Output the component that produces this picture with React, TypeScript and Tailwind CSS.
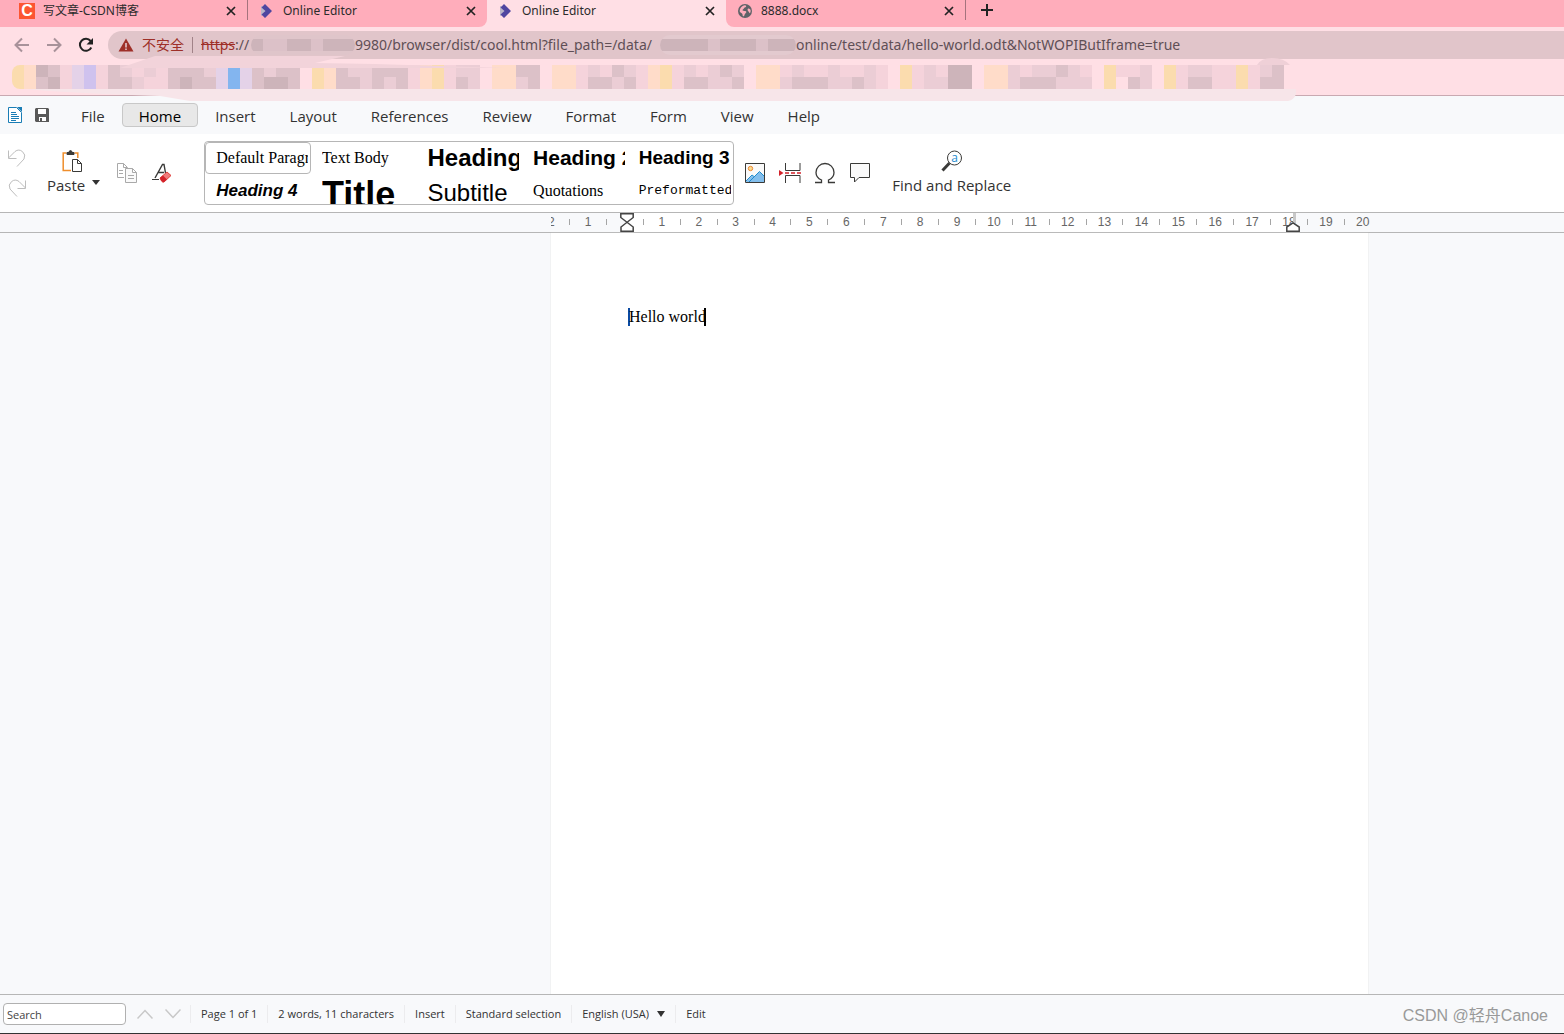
import { Fragment, type ReactNode } from 'react';
import clsx from 'clsx';

const mosaicColors: Record<string, string> = {
  y: '#fbdcae',
  p: '#ffdcc9',
  a: '#f5d3db',
  b: '#ebcdd5',
  c: '#dcc1c8',
  d: '#cdb4ba',
  l: '#e4d2e8',
  v: '#cfc2ee',
  B: '#83b5ef',
};

// Each bookmark: first 12px cell it covers, then its two rows of cells
const bookmarks = [
  { start: 0, rows: ['ypdcalvacbabacccblBlcbcc', 'ypcdalvaccbaacdcclBlcddc'] },
  { start: 25, rows: ['ypcbbcccapyabb', 'ypccbcbcapyacb'] },
  { start: 40, rows: ['ppcc', 'ppbc'] },
  { start: 45, rows: ['ppabacbapyababcb', 'ppaccbcapyaccbbc'] },
  { start: 62, rows: ['ppabaabaaba', 'ppbcccbbcba'] },
  { start: 74, rows: ['yabadd', 'yabbdd'] },
  { start: 81, rows: ['ppbabbcba', 'ppbcccbbb'] },
  { start: 91, rows: ['yaab', 'y.cb'] },
  { start: 96, rows: ['yabbaa', 'yaccaa'] },
  { start: 102, rows: ['ya', 'ya'] },
  { start: 104, rows: ['bc', 'cc'] },
];

const bookmarkRows = [0, 1].map((row) =>
  bookmarks.reduce((line, bookmark) => line.padEnd(bookmark.start, '.') + bookmark.rows[row], ''),
);

const menuTabs = ['File', 'Home', 'Insert', 'Layout', 'References', 'Review', 'Format', 'Form', 'View', 'Help'];

const styles = [
  { name: 'Default Paragraph Style', className: 'font-["Liberation_Serif",serif] text-base' },
  { name: 'Text Body', className: 'font-["Liberation_Serif",serif] text-base' },
  { name: 'Heading 1', className: 'text-2xl font-bold' },
  { name: 'Heading 2', className: 'text-[21px] font-bold' },
  { name: 'Heading 3', className: 'text-[19px] font-bold' },
  { name: 'Heading 4', className: 'text-[17px] font-bold italic' },
  { name: 'Title', className: 'pt-2 text-4xl font-bold' },
  { name: 'Subtitle', className: 'pt-1 text-2xl' },
  { name: 'Quotations', className: 'font-["Liberation_Serif",serif] text-base' },
  { name: 'Preformatted Text', className: 'font-["Liberation_Mono",monospace] text-[13px]' },
];

function Mosaic({ rows, className }: { rows: string[]; className?: string }) {
  return (
    <svg
      className={className}
      width={rows[0].length * 12}
      height={rows.length * 12}
      shapeRendering="crispEdges"
      aria-hidden="true"
    >
      {rows.map((row, y) =>
        row
          .split('')
          .map((key, x) =>
            mosaicColors[key] ? (
              <rect key={`${y}-${x}`} x={x * 12} y={y * 12} width="12" height="12" fill={mosaicColors[key]} />
            ) : null,
          ),
      )}
    </svg>
  );
}

function EditorFavicon() {
  return (
    <svg width="16" height="16" viewBox="0 0 16 16">
      <path d="M2 3l5 1v7l-5 2z" fill="#b9b5c8" />
      <path d="M6 1l7 7-7 7-3.500-3.500L6.500 8 2.500 4.500z" fill="#4f46a0" />
    </svg>
  );
}

function GlobeFavicon() {
  return (
    <svg width="16" height="16" viewBox="0 0 16 16">
      <circle cx="8" cy="8" r="7" fill="#5f6368" />
      <path d="M8 2.200c1 .2 1.500.8 1 1.600-.6.800-1.800.6-2 1.500-.2.900-1.500.9-1.400 1.900.1.800 1.600.6 2.600.7 1.200.2 1.500 1 .8 1.800-.6.700-1.300 1-1.400 2.100-.1.800-.6 1.600-1.400 1.500-.7-.2-.5-1.500-.8-2.300-.3-.8-1.700-1.200-2.600-2.200-.4-3 1.800-6.200 5.200-6.600z" fill="#ffadbb" />
      <path d="M11.300 5.500c1-.2 1.900.6 2.300 1.500.2 1.200 0 2.200-.6 3.200-.9-.2-.7-1.200-1.500-1.800-.9-.6-1.400-2.300-.2-2.900z" fill="#ffadbb" />
    </svg>
  );
}

function BrowserTab({ title, icon }: { title: string; icon: ReactNode }) {
  return (
    <div className="flex h-[21px] w-[239px] shrink-0 items-center pr-[10px] pl-[11px] text-xs text-[#2b2b2b]">
      {icon}
      <span className="ml-2 flex-1 truncate leading-5">{title}</span>
      <button aria-label={`Close ${title}`}>
        <svg width="12" height="12" viewBox="0 0 12 12" stroke="#222" strokeWidth="1.700">
          <path d="M2 2l8 8M10 2l-8 8" />
        </svg>
      </button>
    </div>
  );
}

function BrowserChrome() {
  return (
    <header className="relative h-24 overflow-hidden border-b border-[#c9a9b1] bg-[#ffdfe5] font-['Noto_Sans','Noto_Sans_CJK_SC',sans-serif]">
      <div className="flex h-[27px]">
        <div className="flex rounded-br-lg bg-[#ffadbb] pl-2">
          <BrowserTab
            title="写文章-CSDN博客"
            icon={
              <span className="flex size-4 items-center justify-center bg-[#fc5531] font-['Liberation_Sans',sans-serif] text-base font-bold text-white">
                C
              </span>
            }
          />
          <span className="h-5 w-px bg-[#a5737d]" />
          <BrowserTab title="Online Editor" icon={<EditorFavicon />} />
        </div>
        <BrowserTab title="Online Editor" icon={<EditorFavicon />} />
        <div className="flex flex-1 rounded-bl-lg bg-[#ffadbb]">
          <BrowserTab title="8888.docx" icon={<GlobeFavicon />} />
          <span className="h-5 w-px bg-[#a5737d]" />
          <button aria-label="New tab" className="ml-[15px] h-5">
            <svg width="12" height="12" viewBox="0 0 12 12" stroke="#222" strokeWidth="2">
              <path d="M6 0v12M0 6h12" />
            </svg>
          </button>
        </div>
      </div>

      <div className="flex items-center pt-1 pl-3">
        <button aria-label="Back" className="w-8">
          <svg width="20" height="20" viewBox="0 0 20 20" fill="none" stroke="#a8929a" strokeWidth="2">
            <path d="M17 10H4M10 3.500L3.500 10l6.500 6.500" />
          </svg>
        </button>
        <button aria-label="Forward" className="w-8">
          <svg width="20" height="20" viewBox="0 0 20 20" fill="none" stroke="#a8929a" strokeWidth="2">
            <path d="M3 10h13M10 3.500l6.500 6.500-6.500 6.500" />
          </svg>
        </button>
        <button aria-label="Reload" className="w-8">
          <svg width="20" height="20" viewBox="0 0 20 20">
            <path d="M15.300 12.500A6 6 0 1 1 14.600 6" fill="none" stroke="#222" strokeWidth="2" />
            <path d="M17 3v6.500h-6.500z" fill="#222" />
          </svg>
        </button>
        <div className="flex h-7 flex-1 items-center rounded-l-full bg-[#e1c5ca] pl-[10px] text-sm whitespace-nowrap text-[#5f4f56]">
          <svg width="16" height="16" viewBox="0 0 16 16">
            <path d="M8 1.500L15.500 14.500H.5z" fill="#9e2f28" />
            <path d="M8 6v4.500M8 11.500v1.500" stroke="#e1c5ca" strokeWidth="1.600" />
          </svg>
          <span className="ml-2 text-[#9e2f28]">不安全</span>
          <span className="mx-2 h-4 w-px bg-[#a18288]" />
          <span className="w-[50px]">
            <s className="text-[#9e2f28]">https</s>://
          </span>
          <span className="h-5 w-[104px] overflow-hidden rounded-full bg-[#dfc5ca] py-1">
            <Mosaic rows={['dccddcddd']} />
          </span>
          <span className="w-[305px]">9980/browser/dist/cool.html?file_path=/data/</span>
          <span className="h-5 w-[136px] overflow-hidden rounded-full bg-[#e3cacf] py-1">
            <Mosaic rows={['ddddcdddcddd']} />
          </span>
          <span>online/test/data/hello-world.odt&amp;NotWOPIButIframe=true</span>
        </div>
      </div>

      <svg className="absolute top-14 left-0" width="1296" height="12" aria-hidden="true">
        <path d="M120 12L155 0h190l-30 7 60 1 130 4z" fill="#f2d3da" />
        <path d="M1257 9q4-7 15-7 12 0 18 7z" fill="#efd0d7" />
      </svg>
      <Mosaic rows={bookmarkRows} className="mt-[6px] ml-3 rounded-l-lg" />
    </header>
  );
}

function MenuBar() {
  return (
    <nav className="relative flex h-[38px] items-center bg-[#f8f9fb] pl-2">
      <svg className="absolute -top-[7px] left-0" width="1296" height="14" aria-hidden="true">
        <path d="M24 0h1272v5q-2 6-8 7H190l-30-5-28-1q-60-2-108-6z" fill="#f7e5e9" />
      </svg>
      <svg width="14" height="16" viewBox="0 0 14 16" fill="none" stroke="#1a7db5">
        <path d="M.5.5h8l5 5v10H.5z" fill="#fff" />
        <path d="M9 0h5v5z" fill="#1a7db5" stroke="none" />
        <path d="M3 5.500h5M3 7.500h6M3 9.500h8M3 11.500h8M3 13.500h5" />
      </svg>
      <button aria-label="Save" className="ml-[13px]">
        <svg width="14" height="14" viewBox="0 0 14 14">
          <path d="M1 0h12l1 1v13H1l-1-1V1z" fill="#595959" />
          <path d="M3 1h8v5H3zM4 9h7v4H4z" fill="#fff" />
          <path d="M5 10h2v3H5z" fill="#595959" />
        </svg>
      </button>
      <div className="ml-[15px] flex">
        {menuTabs.map((tab) => (
          <button
            key={tab}
            className={clsx(
              'h-6 rounded-sm border px-4 font-["Open_Sans",sans-serif] text-[15px] leading-6',
              tab === 'Home' ? 'border-[#c8c8c8] bg-[#e8e8e8] text-black' : 'border-transparent text-[#333]',
            )}
          >
            {tab}
          </button>
        ))}
      </div>
    </nav>
  );
}

function Toolbar() {
  return (
    <section className="flex h-[79px] items-center border-b border-[#b6b6b6] bg-white pl-[7px] font-['Open_Sans',sans-serif] text-[15px] text-[#333]">
      <div className="flex flex-col gap-3">
        <button aria-label="Undo">
          <svg width="20" height="18" viewBox="0 0 20 18" fill="none" stroke="#bdbdbd">
            <path d="M1.500 1.500v8h8M1.500 9L8 2.500a6 6 0 0 1 9 7.500L10 17.500" />
          </svg>
        </button>
        <button aria-label="Redo">
          <svg width="20" height="18" viewBox="0 0 20 18" fill="none" stroke="#bdbdbd">
            <path d="M18.500 1.500v8h-8M18.500 9L12 2.500A6 6 0 0 0 3 10l7 7.500" />
          </svg>
        </button>
      </div>

      <div className="ml-5 flex items-end">
        <button className="flex flex-col items-center">
          <svg className="ml-3" width="20" height="22" viewBox="0 0 20 22" fill="none">
            <path d="M4.500 3H1.200v17.500H9M12.500 3h3.300v5" stroke="#ef8e2c" strokeWidth="1.500" />
            <path d="M5 4.500V2.500h2q0-2 1.500-2t1.500 2h2v2z" fill="#3a3a38" stroke="#3a3a38" />
            <path d="M10.500 9.500h5l4 4v8h-9zM15.500 9.500v4h4" fill="#fff" stroke="#3a3a38" />
          </svg>
          <span className="pt-px leading-6">Paste</span>
        </button>
        <button aria-label="Paste options" className="mb-3 ml-[7px]">
          <svg width="8" height="5" viewBox="0 0 8 5">
            <path d="M0 0h8L4 5z" fill="#333" />
          </svg>
        </button>
      </div>

      <button aria-label="Copy" className="ml-4">
        <svg width="22" height="21" viewBox="0 0 22 21" fill="none" stroke="#a9a9a9">
          <path d="M8 14.500H1.500v-14h6l4 4M7.500.5v4h4M3 7.500h4M3 10.500h4" />
          <path d="M9.500 5.500h7l4 4v10h-11zM16.500 5.500v4h4M12 12.500h6M12 15.500h6" fill="#fafafa" />
        </svg>
      </button>
      <button aria-label="Clear formatting" className="ml-[14px]">
        <svg width="20" height="20" viewBox="0 0 20 20" fill="none">
          <path d="M3 15L10.500 1.500h1.500L13.500 10M6 9.500h6" stroke="#3a3a38" strokeWidth="1.400" />
          <path d="M0 16.500h7" stroke="#3a3a38" />
          <path d="M8 15l7-6 4 3.500-7 6.500q-1.500.5-2.500-1z" fill="#ef7b7b" stroke="#e0403c" />
          <path d="M8 15l3-2.500 4 4-3 2.500q-1.500.5-2.500-1z" fill="#d3222a" />
        </svg>
      </button>

      <div className="ml-8 grid h-16 w-[530px] grid-cols-5 grid-rows-[33px_29px] overflow-hidden rounded-sm border border-[#b6b6b6] font-['Liberation_Sans',sans-serif] text-black">
        {styles.map((style, index) => (
          <button
            key={style.name}
            className={clsx(
              'h-8 min-w-0 rounded-sm border pl-[10px] text-left',
              index === 0 ? 'border-[#b6b6b6]' : 'border-transparent',
            )}
          >
            <span
              className={clsx('flex h-[30px] w-[92px] items-center overflow-hidden whitespace-nowrap', style.className)}
            >
              {style.name}
            </span>
          </button>
        ))}
      </div>

      <div className="ml-[10px] flex items-center gap-[13px]">
        <button aria-label="Insert image">
          <svg width="22" height="22" viewBox="0 0 22 22">
            <path d="M1.500 1.500h19v19h-19z" fill="#fafafa" stroke="#3a3a38" />
            <circle cx="6.500" cy="6.500" r="2.200" fill="#f8db8f" stroke="#ed8733" />
            <path d="M2 19.500l6-6 2 1.500 5.500-5.500 4.500 4.500V20H2z" fill="#83beec" />
            <path d="M2 19l6-6 2 1.500M5 20l10.500-10.500 4.500 4.500" fill="none" stroke="#1e8bcd" />
          </svg>
        </button>
        <button aria-label="Page break">
          <svg width="22" height="22" viewBox="0 0 22 22" fill="none">
            <path d="M6.500 1v7.500h14.500V1M6.500 21v-7.500h14.500V21" stroke="#3a3a38" />
            <path d="M6 11h16" stroke="#d3222a" strokeWidth="1.400" strokeDasharray="4 2" />
            <path d="M0 8l4.500 3L0 14z" fill="#d3222a" />
          </svg>
        </button>
        <button aria-label="Special character">
          <svg width="22" height="22" viewBox="0 0 22 22" fill="none" stroke="#3a3a38" strokeWidth="1.300">
            <path d="M1 20.500h6.500v-2.500C4 16.500 2 13.500 2 10.500a9 9 0 0 1 18 0c0 3-2 6-5.500 7.500v2.500H21" />
          </svg>
        </button>
        <button aria-label="Insert comment">
          <svg width="22" height="22" viewBox="0 0 22 22" fill="#fafafa" stroke="#3a3a38">
            <path d="M1.500 1.500h19v14H10l-4.500 4.500v-4.500h-4z" />
          </svg>
        </button>
      </div>

      <button className="ml-[21px] flex flex-col items-center">
        <svg width="22" height="22" viewBox="0 0 22 22">
          <path d="M8.500 13l-7 7.500" stroke="#3a3a38" strokeWidth="3" />
          <circle cx="13.500" cy="8" r="7" fill="#fff" stroke="#3a3a38" />
          <text x="13.500" y="12" textAnchor="middle" fontSize="12" fontFamily="Open Sans" fill="#1e8bcd">
            a
          </text>
        </svg>
        <span className="pt-px leading-6">Find and Replace</span>
      </button>
    </section>
  );
}

// Half-centimetre steps, from 2 cm left of the margin up to 20 cm
const rulerSteps = Array.from({ length: 45 }, (_, i) => i - 4);

function Ruler() {
  return (
    <div className="grid h-5 grid-cols-[551fr_817px_196fr] border-b border-[#b6b6b6] font-['Liberation_Sans',sans-serif] text-xs text-[#666]">
      <div />
      <div className="relative w-[821px] overflow-hidden">
        <span className="absolute inset-y-0 left-[76px] w-[666px] bg-white" />
        <div className="relative -ml-[9px] grid h-[18px] w-[830px] grid-cols-[repeat(45,minmax(0,1fr))] items-center">
          {rulerSteps.map((step) => (
            <span key={step} className="flex justify-center">
              {step === 0 ? null : step % 2 === 0 ? (
                Math.abs(step / 2)
              ) : (
                <span className="h-[6px] w-px bg-[#a5a5a5]" />
              )}
            </span>
          ))}
        </div>
        <svg className="absolute top-0 left-[69px]" width="14" height="19" viewBox="0 0 14 19" fill="#fff" stroke="#444" strokeWidth="1.500">
          <path d="M.8.8h12.400v3.700L1 14v4.200h12.200V14L.8 4.500z" />
        </svg>
        <span className="absolute top-0 left-[742px] h-[10px] w-[3px] bg-[#c8c8c8]" />
        <svg className="absolute top-[9px] left-[735px]" width="14" height="10" viewBox="0 0 14 10" fill="#fff" stroke="#444" strokeWidth="1.500">
          <path d="M.8 9.200V5L7 .9 13.200 5v4.200z" />
        </svg>
      </div>
    </div>
  );
}

function StatusBar() {
  const separator = <span className="h-[18px] w-px bg-[#ececee]" />;

  return (
    <footer className="flex h-10 items-center border-t border-b border-t-[#b6b6b6] border-b-[#333] bg-[#f8f9fb] pl-[3px] font-['Open_Sans',sans-serif] text-[11px] text-[#333]">
      <input
        aria-label="Search"
        placeholder="Search"
        className="h-[22px] w-[123px] rounded-sm border border-[#b0b0b0] bg-white px-[3px] placeholder:text-[#444]"
      />
      <button aria-label="Previous match" className="ml-[11px]">
        <svg width="16" height="10" viewBox="0 0 16 10" fill="none" stroke="#c8c8c8" strokeWidth="1.500">
          <path d="M.5 9.500L8 1.500l7.500 8" />
        </svg>
      </button>
      <button aria-label="Next match" className="mr-[9px] ml-3">
        <svg width="16" height="10" viewBox="0 0 16 10" fill="none" stroke="#c8c8c8" strokeWidth="1.500">
          <path d="M.5.5L8 8.500l7.500-8" />
        </svg>
      </button>
      {['Page 1 of 1', '2 words, 11 characters', 'Insert', 'Standard selection'].map((item) => (
        <Fragment key={item}>
          {separator}
          <span className="px-[10px]">{item}</span>
        </Fragment>
      ))}
      {separator}
      <label className="flex items-center px-[10px]">
        <select aria-label="Language" className="appearance-none">
          <option>English (USA)</option>
        </select>
        <svg className="ml-2" width="8" height="6" viewBox="0 0 8 6">
          <path d="M0 0h8L4 6z" fill="#333" />
        </svg>
      </label>
      {separator}
      <span className="px-[10px]">Edit</span>
      <span className="mr-4 ml-auto pt-1 font-['Liberation_Sans','Noto_Sans_CJK_SC',sans-serif] text-base text-[#999]">
        CSDN @轻舟Canoe
      </span>
    </footer>
  );
}

export default function App() {
  return (
    <div className="flex min-h-screen flex-col bg-[#f8f9fb]">
      <BrowserChrome />
      <MenuBar />
      <Toolbar />
      <Ruler />
      <main className="grid flex-1 grid-cols-[551fr_817px_196fr]">
        <div />
        <article className="bg-white px-[77px] pt-[75px] shadow-[0_0_1px_#ccc]">
          <p className="flex h-[18px] items-center font-['Liberation_Serif',serif] text-base text-black">
            <span className="-mr-px h-[18px] w-[2px] bg-[#0b4aa2]" />
            Hello world
            <span className="-ml-[2px] h-[18px] w-[2px] bg-black" />
          </p>
        </article>
      </main>
      <StatusBar />
    </div>
  );
}
